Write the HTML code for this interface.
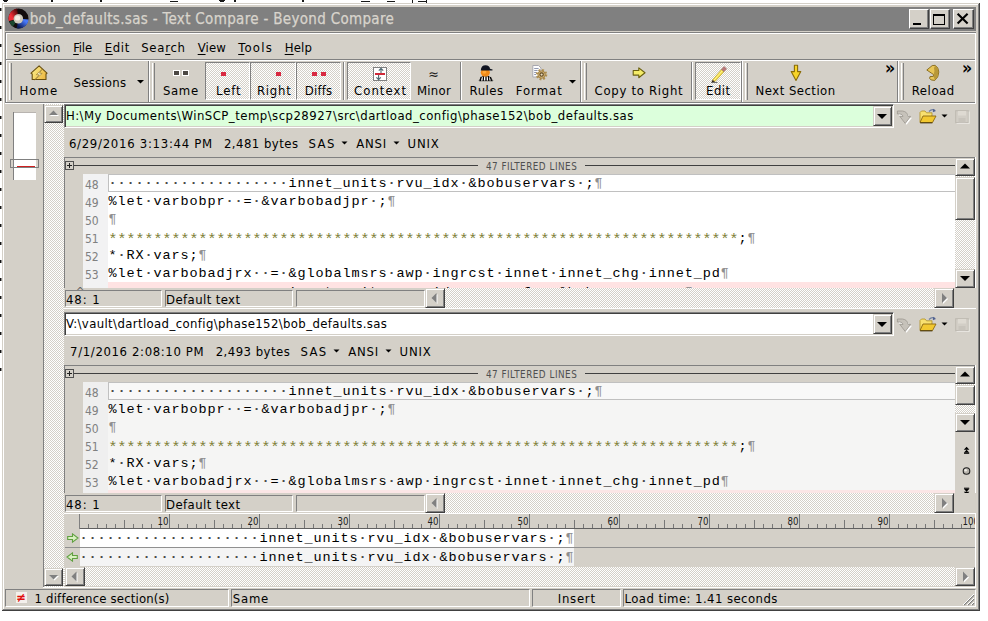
<!DOCTYPE html>
<html lang="en"><head><meta charset="utf-8"><title>bob_defaults.sas - Text Compare - Beyond Compare</title>
<style>
html,body{margin:0;padding:0;background:#fff}
body{width:988px;height:621px;position:relative;overflow:hidden;font-family:"DejaVu Sans Condensed","Liberation Sans",sans-serif;font-size:13.5px;color:#000}
.a{position:absolute;box-sizing:border-box}
.t{position:absolute;white-space:pre;line-height:20px;height:20px}
.m{font-family:"Liberation Mono","DejaVu Sans Mono",monospace}
.chk{background:repeating-conic-gradient(#fff 0% 25%,#d4d0c8 0% 50%) 0 0/2px 2px}
.rb{background:#d4d0c8;border:1px solid;border-color:#d4d0c8 #404040 #404040 #d4d0c8;box-shadow:inset 1px 1px #fff,inset -1px -1px #808080}
.m b{color:#484848;font-weight:bold}
.as{color:#808038;font-size:15.5px;letter-spacing:-0.3px;position:relative;top:2px;margin-left:-0.2px;margin-right:0.2px}
u{text-decoration:underline;text-underline-offset:2px;text-decoration-thickness:1px}
</style></head><body>
<div class="a " style="left:3px;top:0px;width:5px;height:1px;background:#181818"></div>
<div class="a " style="left:4px;top:1px;width:3px;height:1px;background:#181818"></div>
<div class="a " style="left:51px;top:0px;width:2px;height:2px;background:#181818"></div>
<div class="a " style="left:100px;top:0px;width:2px;height:2px;background:#181818"></div>
<div class="a " style="left:170px;top:1px;width:8px;height:1px;background:#181818"></div>
<div class="a " style="left:219px;top:0px;width:6px;height:1px;background:#181818"></div>
<div class="a " style="left:220px;top:1px;width:4px;height:1px;background:#181818"></div>
<div class="a " style="left:234px;top:0px;width:2px;height:2px;background:#181818"></div>
<div class="a " style="left:302px;top:0px;width:2px;height:2px;background:#181818"></div>
<div class="a " style="left:361px;top:1px;width:9px;height:1px;background:#181818"></div>
<div class="a " style="left:387px;top:1px;width:8px;height:1px;background:#181818"></div>
<div class="a " style="left:412px;top:0px;width:1px;height:3px;background:#181818"></div>
<div class="a " style="left:418px;top:1px;width:8px;height:1px;background:#181818"></div>
<div class="a " style="left:426px;top:0px;width:1px;height:3px;background:#181818"></div>
<div class="a " style="left:0px;top:8px;width:1px;height:3px;background:#101010"></div>
<div class="a " style="left:1px;top:8px;width:1px;height:3px;background:#909090"></div>
<div class="a " style="left:0px;top:26px;width:1px;height:3px;background:#101010"></div>
<div class="a " style="left:1px;top:26px;width:1px;height:3px;background:#909090"></div>
<div class="a " style="left:0px;top:44px;width:1px;height:3px;background:#101010"></div>
<div class="a " style="left:1px;top:44px;width:1px;height:3px;background:#909090"></div>
<div class="a " style="left:0px;top:62px;width:1px;height:3px;background:#101010"></div>
<div class="a " style="left:1px;top:62px;width:1px;height:3px;background:#909090"></div>
<div class="a " style="left:0px;top:80px;width:1px;height:3px;background:#101010"></div>
<div class="a " style="left:1px;top:80px;width:1px;height:3px;background:#909090"></div>
<div class="a " style="left:0px;top:98px;width:1px;height:3px;background:#101010"></div>
<div class="a " style="left:1px;top:98px;width:1px;height:3px;background:#909090"></div>
<div class="a " style="left:0px;top:116px;width:1px;height:3px;background:#101010"></div>
<div class="a " style="left:1px;top:116px;width:1px;height:3px;background:#909090"></div>
<div class="a " style="left:0px;top:134px;width:1px;height:3px;background:#101010"></div>
<div class="a " style="left:1px;top:134px;width:1px;height:3px;background:#909090"></div>
<div class="a " style="left:0px;top:152px;width:1px;height:3px;background:#101010"></div>
<div class="a " style="left:1px;top:152px;width:1px;height:3px;background:#909090"></div>
<div class="a " style="left:0px;top:170px;width:1px;height:3px;background:#101010"></div>
<div class="a " style="left:1px;top:170px;width:1px;height:3px;background:#909090"></div>
<div class="a " style="left:0px;top:188px;width:1px;height:3px;background:#101010"></div>
<div class="a " style="left:1px;top:188px;width:1px;height:3px;background:#909090"></div>
<div class="a " style="left:0px;top:206px;width:1px;height:3px;background:#101010"></div>
<div class="a " style="left:1px;top:206px;width:1px;height:3px;background:#909090"></div>
<div class="a " style="left:0px;top:224px;width:1px;height:3px;background:#101010"></div>
<div class="a " style="left:1px;top:224px;width:1px;height:3px;background:#909090"></div>
<div class="a " style="left:0px;top:242px;width:1px;height:3px;background:#101010"></div>
<div class="a " style="left:1px;top:242px;width:1px;height:3px;background:#909090"></div>
<div class="a " style="left:0px;top:260px;width:1px;height:3px;background:#101010"></div>
<div class="a " style="left:1px;top:260px;width:1px;height:3px;background:#909090"></div>
<div class="a " style="left:0px;top:278px;width:1px;height:3px;background:#101010"></div>
<div class="a " style="left:1px;top:278px;width:1px;height:3px;background:#909090"></div>
<div class="a " style="left:0px;top:296px;width:1px;height:3px;background:#101010"></div>
<div class="a " style="left:1px;top:296px;width:1px;height:3px;background:#909090"></div>
<div class="a " style="left:0px;top:314px;width:1px;height:3px;background:#101010"></div>
<div class="a " style="left:1px;top:314px;width:1px;height:3px;background:#909090"></div>
<div class="a " style="left:0px;top:332px;width:1px;height:3px;background:#101010"></div>
<div class="a " style="left:1px;top:332px;width:1px;height:3px;background:#909090"></div>
<div class="a " style="left:0px;top:350px;width:1px;height:3px;background:#101010"></div>
<div class="a " style="left:1px;top:350px;width:1px;height:3px;background:#909090"></div>
<div class="a " style="left:0px;top:368px;width:1px;height:3px;background:#101010"></div>
<div class="a " style="left:1px;top:368px;width:1px;height:3px;background:#909090"></div>
<div class="a " style="left:2px;top:3px;width:978px;height:608px;background:#d4d0c8"></div>
<div class="a " style="left:3px;top:4px;width:976px;height:1px;background:#ffffff"></div>
<div class="a " style="left:3px;top:4px;width:1px;height:606px;background:#ffffff"></div>
<div class="a " style="left:2px;top:610px;width:978px;height:1px;background:#404040"></div>
<div class="a " style="left:979px;top:3px;width:1px;height:608px;background:#404040"></div>
<div class="a " style="left:3px;top:609px;width:976px;height:1px;background:#808080"></div>
<div class="a " style="left:978px;top:4px;width:1px;height:606px;background:#808080"></div>
<div class="a " style="left:5px;top:7px;width:971px;height:24px;background:#808080"></div>
<div class="t" style="left:29.7px;top:9.40px;font-size:15px;color:#d8d4cc;letter-spacing:0.32px;-webkit-text-stroke:0.25px #d8d4cc;">bob_defaults.sas - Text Compare - Beyond Compare</div>
<svg class="a" style="left:7px;top:7px" width="23" height="23"><defs><linearGradient id="rg" x1="0" y1="1" x2="1" y2="0"><stop offset="0.25" stop-color="#f03038"/><stop offset="1" stop-color="#500808"/></linearGradient>
<linearGradient id="bg" x1="1" y1="0" x2="0" y2="1"><stop offset="0.2" stop-color="#4878f8"/><stop offset="1" stop-color="#0c1c58"/></linearGradient></defs>
<circle cx="11.5" cy="11.5" r="7.3" fill="none" stroke="#120c0c" stroke-width="5.4"/>
<path d="M4.45 13.39 A7.3 7.3 0 0 1 10.48 4.27" fill="none" stroke="url(#rg)" stroke-width="5.4"/>
<path d="M18.77 12.14 A7.3 7.3 0 0 1 10.23 18.69" fill="none" stroke="url(#bg)" stroke-width="5.4"/>
<path d="M7.31 17.48 A7.3 7.3 0 0 1 4.64 14" fill="none" stroke="#1c4830" stroke-width="5"/>
<circle cx="11.3" cy="11.9" r="4.7" fill="#cfcabc"/><circle cx="10.6" cy="11" r="2.6" fill="#f2eee4"/></svg>
<div class="a " style="left:909px;top:9px;width:20px;height:20px;background:#d4d0c8;border:1px solid;border-color:#fff #404040 #404040 #fff;box-shadow:inset -1px -1px #808080"></div>
<div class="a " style="left:930px;top:9px;width:20px;height:20px;background:#d4d0c8;border:1px solid;border-color:#fff #404040 #404040 #fff;box-shadow:inset -1px -1px #808080"></div>
<div class="a " style="left:953px;top:9px;width:21px;height:20px;background:#d4d0c8;border:1px solid;border-color:#fff #404040 #404040 #fff;box-shadow:inset -1px -1px #808080"></div>
<div class="a " style="left:913px;top:23px;width:8px;height:2px;background:#000"></div>
<div class="a " style="left:933px;top:14px;width:12px;height:11px;border:1px solid #000;border-top-width:2px"></div>
<svg class="a" style="left:956px;top:13px" width="14" height="12"><path d="M1.6 0.8 L11.6 10.6 M11.6 0.8 L1.6 10.6" stroke="#000" stroke-width="2.1" fill="none"/></svg>
<div class="a " style="left:5px;top:32px;width:971px;height:1px;background:#808080"></div>
<div class="a " style="left:5px;top:33px;width:971px;height:1px;background:#ffffff"></div>
<div class="a " style="left:5px;top:32px;width:1px;height:71px;background:#808080"></div>
<div class="a " style="left:6px;top:33px;width:1px;height:70px;background:#ffffff"></div>
<div class="a " style="left:975px;top:33px;width:1px;height:70px;background:#ffffff"></div>
<div class="t" style="left:13.7px;top:38.00px;font-size:13px;letter-spacing:0.33px;"><u>S</u>ession</div>
<div class="t" style="left:73.2px;top:38.00px;font-size:13px;letter-spacing:-0.19px;"><u>F</u>ile</div>
<div class="t" style="left:104.7px;top:38.00px;font-size:13px;letter-spacing:0.65px;"><u>E</u>dit</div>
<div class="t" style="left:141.2px;top:38.00px;font-size:13px;letter-spacing:0.73px;">Sea<u>r</u>ch</div>
<div class="t" style="left:197.7px;top:38.00px;font-size:13px;letter-spacing:0.16px;"><u>V</u>iew</div>
<div class="t" style="left:238.2px;top:38.00px;font-size:13px;letter-spacing:1.25px;"><u>T</u>ools</div>
<div class="t" style="left:284.7px;top:38.00px;font-size:13px;letter-spacing:0.2px;"><u>H</u>elp</div>
<div class="a " style="left:6px;top:59px;width:969px;height:1px;background:#808080"></div>
<div class="a " style="left:6px;top:60px;width:969px;height:1px;background:#ffffff"></div>
<div class="a " style="left:6px;top:102px;width:969px;height:1px;background:#808080"></div>
<div class="a " style="left:5px;top:103px;width:971px;height:1px;background:#ffffff"></div>
<div class="a " style="left:148px;top:61px;width:1px;height:41px;background:#808080"></div>
<div class="a " style="left:149px;top:61px;width:1px;height:41px;background:#ffffff"></div>
<div class="a " style="left:580px;top:61px;width:1px;height:41px;background:#808080"></div>
<div class="a " style="left:581px;top:61px;width:1px;height:41px;background:#ffffff"></div>
<div class="a " style="left:741px;top:61px;width:1px;height:41px;background:#808080"></div>
<div class="a " style="left:742px;top:61px;width:1px;height:41px;background:#ffffff"></div>
<div class="a " style="left:897px;top:61px;width:1px;height:41px;background:#808080"></div>
<div class="a " style="left:898px;top:61px;width:1px;height:41px;background:#ffffff"></div>
<div class="a " style="left:9px;top:63px;width:1px;height:37px;background:#ffffff"></div>
<div class="a " style="left:11px;top:63px;width:1px;height:37px;background:#808080"></div>
<div class="a " style="left:152px;top:63px;width:1px;height:37px;background:#ffffff"></div>
<div class="a " style="left:154px;top:63px;width:1px;height:37px;background:#808080"></div>
<div class="a " style="left:584px;top:63px;width:1px;height:37px;background:#ffffff"></div>
<div class="a " style="left:586px;top:63px;width:1px;height:37px;background:#808080"></div>
<div class="a " style="left:745px;top:63px;width:1px;height:37px;background:#ffffff"></div>
<div class="a " style="left:747px;top:63px;width:1px;height:37px;background:#808080"></div>
<div class="a " style="left:901px;top:63px;width:1px;height:37px;background:#ffffff"></div>
<div class="a " style="left:903px;top:63px;width:1px;height:37px;background:#808080"></div>
<svg class="a" style="left:29px;top:64px" width="20" height="18"><defs><linearGradient id="hg" x1="0" y1="0" x2="1" y2="0.4"><stop offset="0" stop-color="#fbf590"/><stop offset="1" stop-color="#eebc48"/></linearGradient></defs>
<path d="M10.1 1.9 L18 9.2 L17 10 L17 15.5 L3.2 15.5 L3.2 10 L2 9.2 Z" fill="url(#hg)" stroke="#6a5010" stroke-width="1.1" stroke-linejoin="round"/>
<path d="M12.8 5.6 L7.4 10.6 L10.2 10.8 L5.6 16 L13.2 9.4 L10.4 9.2 Z" fill="#fffcd8" stroke="#8a6a18" stroke-width="0.6"/></svg>
<div class="t" style="left:19.6px;top:81.00px;font-size:13px;letter-spacing:0.98px;">Home</div>
<div class="t" style="left:73.5px;top:73.00px;font-size:13px;letter-spacing:0.25px;">Sessions</div>
<svg class="a" style="left:136px;top:79px" width="9" height="6"><polygon points="1,1 8,1 4.5,4.5" fill="#000"/></svg>
<div class="a " style="left:173px;top:70px;width:7px;height:6px;background:#ffffff"></div>
<div class="a " style="left:174px;top:71px;width:5px;height:4px;background:#4c4844"></div>
<div class="a " style="left:182px;top:70px;width:7px;height:6px;background:#ffffff"></div>
<div class="a " style="left:183px;top:71px;width:5px;height:4px;background:#4c4844"></div>
<div class="t" style="left:162.9px;top:81.00px;font-size:13px;letter-spacing:0.67px;">Same</div>
<div class="a chk" style="left:205px;top:62px;width:45px;height:38px;border:1px solid;border-color:#808080 #fff #fff #808080"></div>
<div class="a " style="left:221px;top:72px;width:5px;height:4px;background:#d82840"></div>
<div class="t" style="left:216.0px;top:81.00px;font-size:13px;letter-spacing:0.88px;">Left</div>
<div class="a chk" style="left:250px;top:62px;width:46px;height:38px;border:1px solid;border-color:#808080 #fff #fff #808080"></div>
<div class="a " style="left:276px;top:72px;width:5px;height:4px;background:#d82840"></div>
<div class="t" style="left:256.9px;top:81.00px;font-size:13px;letter-spacing:0.77px;">Right</div>
<div class="a chk" style="left:296px;top:62px;width:45px;height:38px;border:1px solid;border-color:#808080 #fff #fff #808080"></div>
<div class="a " style="left:312px;top:72px;width:5px;height:4px;background:#d82840"></div>
<div class="a " style="left:321px;top:72px;width:5px;height:4px;background:#d82840"></div>
<div class="t" style="left:304.7px;top:81.00px;font-size:13px;letter-spacing:0.22px;">Diffs</div>
<div class="a " style="left:343px;top:62px;width:1px;height:38px;background:#808080"></div>
<div class="a " style="left:344px;top:62px;width:1px;height:38px;background:#ffffff"></div>
<div class="a chk" style="left:347px;top:62px;width:64px;height:38px;border:1px solid;border-color:#808080 #fff #fff #808080"></div>
<svg class="a" style="left:373px;top:67px" width="15" height="15"><rect x="0.5" y="0.5" width="13" height="13" fill="#fff" stroke="#808080"/>
<path d="M8 1.2 L8 6 M5.8 3.6 L8 1.3 L10.2 3.6 M5.6 12.6 L5.6 8 M3.4 10.4 L5.6 12.7 L7.8 10.4" stroke="#506870" stroke-width="1.1" fill="none"/>
<rect x="2" y="6" width="10" height="2" fill="#d02838"/></svg>
<div class="t" style="left:354.0px;top:81.00px;font-size:13px;letter-spacing:1.03px;">Context</div>
<div class="t" style="left:428.2px;top:64.00px;font-size:14px;color:#202020;letter-spacing:1.04px;">≈</div>
<div class="t" style="left:416.9px;top:81.00px;font-size:13px;letter-spacing:0.3px;">Minor</div>
<div class="a " style="left:460px;top:62px;width:1px;height:38px;background:#808080"></div>
<div class="a " style="left:461px;top:62px;width:1px;height:38px;background:#ffffff"></div>
<svg class="a" style="left:477px;top:64px" width="18" height="18"><path d="M2 16.8 L4.5 12.8 Q8.5 10.5 12.5 12.8 L16 16.8 Z" fill="#fff" stroke="#101010" stroke-width="0.6"/>
<path d="M4.2 13 L3.2 17 M6.5 12 L6.2 17 M9 11.8 L9 17 M11.4 12 L11.8 17 M13.4 13 L14.6 17" stroke="#000" stroke-width="1.3"/>
<ellipse cx="8.3" cy="8.6" rx="4.6" ry="4" fill="#f08a18"/><ellipse cx="7.4" cy="8" rx="2" ry="1.8" fill="#ffa838"/>
<path d="M3.8 6.4 Q4 1.2 8.6 1.2 Q12.6 1.2 13 4.8 L15.6 5.4 L15.4 6.6 L3.8 6.6 Z" fill="#101420"/></svg>
<div class="t" style="left:469.6px;top:81.00px;font-size:13px;letter-spacing:0.5px;">Rules</div>
<svg class="a" style="left:531px;top:64px" width="18" height="18"><path d="M1.8 1.5 L7.5 1.5 L10 4 L10 13 L1.8 13 Z" fill="#fdfdfd" stroke="#a8a8b0" stroke-width="1"/>
<path d="M3.2 4.5 H7.6 M3.2 6.5 H6.6 M3.2 8.5 H5.6 M3.2 10.5 H5" stroke="#9098b0" stroke-width="1"/>
<circle cx="10.6" cy="10.6" r="4.6" fill="none" stroke="#b09050" stroke-width="2.2" stroke-dasharray="1.9 1.7"/>
<circle cx="10.6" cy="10.6" r="3.7" fill="#d2b478" stroke="#9a7838" stroke-width="0.8"/>
<circle cx="10.6" cy="10.6" r="1.7" fill="#e8dcc0" stroke="#604820" stroke-width="1.1"/></svg>
<div class="t" style="left:515.7px;top:81.00px;font-size:13px;letter-spacing:0.99px;">Format</div>
<svg class="a" style="left:568px;top:79px" width="9" height="6"><polygon points="1,1 8,1 4.5,4.5" fill="#000"/></svg>
<svg class="a" style="left:632px;top:67px" width="15" height="12"><path d="M1.2 3.5 L6.8 3.5 L6.8 0.9 L13 5.8 L6.8 10.7 L6.8 8.1 L1.2 8.1 Z" fill="#f4ec68" stroke="#6a6010" stroke-width="1.1" stroke-linejoin="round"/></svg>
<div class="t" style="left:594.6px;top:81.00px;font-size:13px;letter-spacing:0.7px;">Copy to Right</div>
<div class="a " style="left:691px;top:62px;width:1px;height:38px;background:#808080"></div>
<div class="a " style="left:692px;top:62px;width:1px;height:38px;background:#ffffff"></div>
<div class="a chk" style="left:695px;top:62px;width:46px;height:38px;border:1px solid;border-color:#808080 #fff #fff #808080"></div>
<svg class="a" style="left:710px;top:65px" width="18" height="18"><path d="M2.5 15 L11.5 4.5 L14 6.6 L5 16.6 Z" fill="#f4dc48" stroke="#b09828" stroke-width="0.6"/>
<path d="M3.6 15.6 L12.6 5.4" stroke="#fff8a0" stroke-width="0.9"/>
<path d="M11.5 4.5 L14 1.6 L16.6 3.8 L14 6.6 Z" fill="#b87878" stroke="#905858" stroke-width="0.5"/>
<path d="M2.5 15 L1.4 17.4 L5 16.6 Z" fill="#302010"/>
<path d="M1 17.5 H7.5" stroke="#707070" stroke-width="1"/></svg>
<div class="t" style="left:706.1px;top:81.00px;font-size:13px;letter-spacing:0.48px;">Edit</div>
<svg class="a" style="left:790px;top:64px" width="12" height="18"><path d="M4.4 1.2 L7.6 1.2 L7.6 7.6 L10.8 7.6 L6 16.4 L1.2 7.6 L4.4 7.6 Z" fill="#f8d428" stroke="#8a6c08" stroke-width="1.1" stroke-linejoin="round"/></svg>
<div class="t" style="left:755.6px;top:81.00px;font-size:13px;letter-spacing:0.47px;">Next Section</div>
<div class="t" style="left:885px;top:57.50px;font-size:17.5px;font-weight:bold;">»</div>
<svg class="a" style="left:925px;top:64px" width="16" height="18"><path d="M7.2 1.6 L10.2 1.3 Q13.6 3.4 13.8 8 Q13.6 13.6 9.8 16.4 L6.2 16 Q3.6 14.4 5 12.6 L8.4 12.4 L8.6 10.6 L6.8 9.4 L1.8 6 Z" fill="#e8c658" stroke="#806418" stroke-width="0.9" stroke-linejoin="round"/>
<path d="M10.2 1.6 Q13.2 3.8 13.3 8 Q13.2 13 9.8 16 L8.6 12.4 L8.8 10 Q10 7 9 4 Z" fill="#b89838"/></svg>
<div class="t" style="left:911.8px;top:81.00px;font-size:13px;letter-spacing:0.53px;">Reload</div>
<div class="t" style="left:962px;top:57.50px;font-size:17.5px;font-weight:bold;">»</div>
<div class="a " style="left:13px;top:112px;width:23px;height:68px;background:#ffffff"></div>
<div class="a " style="left:13px;top:112px;width:23px;height:1px;background:#b8b4b0"></div>
<div class="a " style="left:13px;top:112px;width:1px;height:68px;background:#808080"></div>
<div class="a " style="left:10px;top:159px;width:29px;height:9px;border:1px solid #808080"></div>
<div class="a " style="left:17px;top:166px;width:18px;height:1px;background:#d02020"></div>
<div class="a " style="left:43px;top:104px;width:1px;height:483px;background:#808080"></div>
<div class="a chk" style="left:44px;top:104px;width:20px;height:483px;"></div>
<div class="a rb" style="left:44px;top:105px;width:19px;height:18px"></div>
<svg class="a" style="left:48px;top:110px" width="12" height="8"><g transform="translate(1,1)"><polygon points="1,5.0 10,5.0 5.5,0.5" fill="#ffffff"/></g><polygon points="1,5.0 10,5.0 5.5,0.5" fill="#808080"/></svg>
<div class="a rb" style="left:44px;top:568px;width:19px;height:18px"></div>
<svg class="a" style="left:48px;top:574px" width="12" height="8"><g transform="translate(1,1)"><polygon points="1,1 10,1 5.5,5.5" fill="#ffffff"/></g><polygon points="1,1 10,1 5.5,5.5" fill="#808080"/></svg>
<div class="a " style="left:64px;top:104px;width:830px;height:24px;border:1px solid;border-color:#808080 #fff #fff #808080;box-shadow:inset 1px 1px #404040,inset -1px -1px #d4d0c8;background:#dcffdc;"></div>
<div class="t" style="left:65.9px;top:106.30px;font-size:13px;letter-spacing:0.47px;">H:\My Documents\WinSCP_temp\scp28927\src\dartload_config\phase152\bob_defaults.sas</div>
<div class="a rb" style="left:873px;top:106px;width:19px;height:20px"></div>
<svg class="a" style="left:876px;top:113px" width="13" height="8"><polygon points="1.0,1 11.0,1 6.0,6.0" fill="#000"/></svg>
<svg class="a" style="left:896px;top:110px" width="17" height="15"><path d="M2 1.6 L7 1.6 Q12 2.2 12.6 7 L15.2 7 L9.8 14 L4.4 7 L7.6 7 Q7.4 4.6 4.4 4.6 L2 4.6 Z" fill="#fff" transform="translate(0.8,0.8)"/><path d="M1.4 1 L6.4 1 Q11.4 1.6 12 6.4 L14.6 6.4 L9.2 13.4 L3.8 6.4 L7 6.4 Q6.8 4 3.8 4 L1.4 4 Z" fill="#c6c2ba" stroke="#a09c94" stroke-width="0.9"/></svg>
<svg class="a" style="left:919px;top:108px" width="19" height="16"><path d="M10 3.5 Q13 0.5 16 2.5" stroke="#7080a0" stroke-width="1.3" fill="none"/><path d="M14.2 0.8 L17 3 L13.8 4.2 Z" fill="#506090"/>
<path d="M1 14 L1 4.5 L2.5 3 L6 3 L7.5 4.8 L13 4.8 L13 8 Z" fill="#f8e070" stroke="#b09020" stroke-width="0.8"/>
<path d="M1 14.5 L4 8 L17 8 L13.5 14.5 Z" fill="#f2c830" stroke="#8a6810" stroke-width="0.9"/><path d="M1.2 14.9 H13.4" stroke="#403008" stroke-width="0.9"/></svg>
<svg class="a" style="left:941px;top:114px" width="7" height="5"><polygon points="0.5,0.5 6.5,0.5 3.5,3.5" fill="#000"/></svg>
<svg class="a" style="left:955px;top:110px" width="15" height="14"><rect x="0.7" y="0.7" width="12.6" height="12" fill="#d2cec6" stroke="#bcb8b0" stroke-width="1"/><rect x="3" y="1" width="8" height="4.5" fill="#dedad2"/><rect x="3.5" y="8" width="7" height="4.7" fill="#c8c4bc"/><path d="M14.2 1.5 L14.2 13.7 L1.5 13.7" stroke="#f4f2ee" stroke-width="0.8" fill="none"/></svg>
<div class="t" style="left:68.9px;top:134.20px;font-size:13px;letter-spacing:0.72px;">6/29/2016 3:13:44 PM</div>
<div class="t" style="left:223.9px;top:134.20px;font-size:13px;letter-spacing:0.47px;">2,481 bytes</div>
<div class="t" style="left:308.6px;top:134.20px;font-size:13px;letter-spacing:1.35px;">SAS</div>
<svg class="a" style="left:341px;top:141.2px" width="7" height="5"><polygon points="0.5,0.5 6.5,0.5 3.5,3.5" fill="#000"/></svg>
<div class="t" style="left:356.2px;top:134.20px;font-size:13px;letter-spacing:0.79px;">ANSI</div>
<svg class="a" style="left:393px;top:141.2px" width="7" height="5"><polygon points="0.5,0.5 6.5,0.5 3.5,3.5" fill="#000"/></svg>
<div class="t" style="left:407.6px;top:134.20px;font-size:13px;letter-spacing:0.81px;">UNIX</div>
<div class="a " style="left:64px;top:157px;width:912px;height:1px;background:#808080"></div>
<div class="a " style="left:64px;top:157px;width:1px;height:151px;background:#808080"></div>
<div class="a " style="left:65px;top:158px;width:890px;height:16px;background:#d4d0c8"></div>
<div class="a " style="left:74px;top:165px;width:404px;height:1px;background:#404040"></div>
<div class="a " style="left:585px;top:165px;width:370px;height:1px;background:#404040"></div>
<div class="a " style="left:65px;top:161px;width:9px;height:9px;border:1px solid #505050;background:#d4d0c8"></div>
<div class="a " style="left:67px;top:165px;width:5px;height:1px;background:#202020"></div>
<div class="a " style="left:69px;top:163px;width:1px;height:5px;background:#202020"></div>
<div class="t" style="left:485.9px;top:156.80px;font-size:9.8px;color:#505050;letter-spacing:0.51px;">47 FILTERED LINES</div>
<div class="a " style="left:65px;top:174px;width:18px;height:114px;background:#d4d0c8"></div>
<div class="a " style="left:83px;top:174px;width:25px;height:114px;background:#f2f2f3"></div>
<div class="a " style="left:108px;top:174px;width:847px;height:114px;background:#ffffff"></div>
<div class="a" style="left:65px;top:174px;width:890px;height:114px;overflow:hidden"><div class="a" style="left:-65px;top:-174px;width:988px;height:621px">
<div class="a " style="left:108px;top:174px;width:848px;height:18px;border:1px solid #c0c0c0;background:#ffffff"></div>
<div class="t" style="left:85.0px;top:174.90px;font-size:12px;color:#808080;">48</div>
<div class="t m" style="left:108.4px;top:174.00px;font-size:13.5px;letter-spacing:0.9px;"><b>····················</b>innet_units<b>·</b>rvu_idx<b>·</b>&amp;bobuservars<b>·</b>;<span style="color:#909090">¶</span></div>
<div class="t" style="left:85.0px;top:192.90px;font-size:12px;color:#808080;">49</div>
<div class="t m" style="left:108.4px;top:192.00px;font-size:13.5px;letter-spacing:0.9px;">%let<b>·</b>varbobpr<b>··</b>=<b>·</b>&amp;varbobadjpr<b>·</b>;<span style="color:#909090">¶</span></div>
<div class="t" style="left:85.0px;top:210.90px;font-size:12px;color:#808080;">50</div>
<div class="t m" style="left:108.4px;top:210.00px;font-size:13.5px;letter-spacing:0.9px;"><span style="color:#909090">¶</span></div>
<div class="t" style="left:85.0px;top:228.90px;font-size:12px;color:#808080;">51</div>
<div class="t m" style="left:108.4px;top:228.00px;font-size:13.5px;letter-spacing:0.9px;"><span class="as">**********************************************************************</span>;<span style="color:#909090">¶</span></div>
<div class="t" style="left:85.0px;top:246.90px;font-size:12px;color:#808080;">52</div>
<div class="t m" style="left:108.4px;top:246.00px;font-size:13.5px;letter-spacing:0.9px;">*<b>·</b>RX<b>·</b>vars;<span style="color:#909090">¶</span></div>
<div class="t" style="left:85.0px;top:264.90px;font-size:12px;color:#808080;">53</div>
<div class="t m" style="left:108.4px;top:264.00px;font-size:13.5px;letter-spacing:0.9px;">%let<b>·</b>varbobadjrx<b>··</b>=<b>·</b>&amp;globalmsrs<b>·</b>awp<b>·</b>ingrcst<b>·</b>innet<b>·</b>innet_chg<b>·</b>innet_pd<span style="color:#909090">¶</span></div>
<div class="a " style="left:108px;top:282px;width:847px;height:16px;background:#ffe3e3"></div>
<div class="t m" style="left:108.4px;top:282.70px;font-size:13.5px;letter-spacing:0.9px;"><b>····················</b>innet_units<b>·</b>rvu_idx<b>·</b>rvuperfac<b>·</b>&amp;bobuservars<b>·</b>;<span style="color:#909090">¶</span></div>
</div></div>
<div class="a chk" style="left:955px;top:158px;width:20px;height:130px;"></div>
<div class="a rb" style="left:955px;top:158px;width:20px;height:18px"></div>
<svg class="a" style="left:959px;top:163px" width="13" height="8"><polygon points="1.0,5.5 11.0,5.5 6.0,0.5" fill="#000"/></svg>
<div class="a rb" style="left:955px;top:177px;width:20px;height:43px"></div>
<div class="a rb" style="left:955px;top:269px;width:20px;height:19px"></div>
<svg class="a" style="left:959px;top:275px" width="13" height="8"><polygon points="1.0,1 11.0,1 6.0,6.0" fill="#000"/></svg>
<div class="a " style="left:975px;top:157px;width:1px;height:151px;background:#ffffff"></div>
<div class="a " style="left:64px;top:288px;width:912px;height:21px;background:#d4d0c8"></div>
<div class="a " style="left:65px;top:290px;width:97px;height:17px;border:1px solid;border-color:#808080 #fff #fff #808080;"></div>
<div class="t" style="left:65.9px;top:290.20px;font-size:13px;letter-spacing:0.93px;">48: 1</div>
<div class="a " style="left:165px;top:290px;width:128px;height:17px;border:1px solid;border-color:#808080 #fff #fff #808080;"></div>
<div class="t" style="left:166.1px;top:290.20px;font-size:13px;letter-spacing:0.4px;">Default text</div>
<div class="a " style="left:296px;top:290px;width:129px;height:17px;border:1px solid;border-color:#808080 #fff #fff #808080;"></div>
<div class="a chk" style="left:425px;top:288px;width:530px;height:20px;"></div>
<div class="a rb" style="left:425px;top:288px;width:20px;height:20px"></div>
<svg class="a" style="left:430px;top:292px" width="9" height="13"><g transform="translate(1,1)"><polygon points="6.5,1.0 6.5,11.0 1.5,6.0" fill="#ffffff"/></g><polygon points="6.5,1.0 6.5,11.0 1.5,6.0" fill="#808080"/></svg>
<div class="a rb" style="left:934px;top:288px;width:20px;height:20px"></div>
<svg class="a" style="left:941px;top:292px" width="9" height="13"><g transform="translate(1,1)"><polygon points="1,1.0 1,11.0 6.0,6.0" fill="#ffffff"/></g><polygon points="1,1.0 1,11.0 6.0,6.0" fill="#808080"/></svg>
<div class="a " style="left:954px;top:288px;width:21px;height:20px;background:#d4d0c8"></div>
<div class="a " style="left:64px;top:308px;width:912px;height:1px;background:#ffffff"></div>
<div class="t" style="left:76px;top:281.50px;font-size:11px;color:#606060;height:8px;overflow:hidden;">^</div>
<div class="a " style="left:64px;top:312px;width:830px;height:24px;border:1px solid;border-color:#808080 #fff #fff #808080;box-shadow:inset 1px 1px #404040,inset -1px -1px #d4d0c8;background:#ffffff;"></div>
<div class="t" style="left:65.9px;top:314.30px;font-size:13px;letter-spacing:0.38px;">V:\vault\dartload_config\phase152\bob_defaults.sas</div>
<div class="a rb" style="left:873px;top:314px;width:19px;height:20px"></div>
<svg class="a" style="left:876px;top:321px" width="13" height="8"><polygon points="1.0,1 11.0,1 6.0,6.0" fill="#000"/></svg>
<svg class="a" style="left:896px;top:318px" width="17" height="15"><path d="M2 1.6 L7 1.6 Q12 2.2 12.6 7 L15.2 7 L9.8 14 L4.4 7 L7.6 7 Q7.4 4.6 4.4 4.6 L2 4.6 Z" fill="#fff" transform="translate(0.8,0.8)"/><path d="M1.4 1 L6.4 1 Q11.4 1.6 12 6.4 L14.6 6.4 L9.2 13.4 L3.8 6.4 L7 6.4 Q6.8 4 3.8 4 L1.4 4 Z" fill="#c6c2ba" stroke="#a09c94" stroke-width="0.9"/></svg>
<svg class="a" style="left:919px;top:316px" width="19" height="16"><path d="M10 3.5 Q13 0.5 16 2.5" stroke="#7080a0" stroke-width="1.3" fill="none"/><path d="M14.2 0.8 L17 3 L13.8 4.2 Z" fill="#506090"/>
<path d="M1 14 L1 4.5 L2.5 3 L6 3 L7.5 4.8 L13 4.8 L13 8 Z" fill="#f8e070" stroke="#b09020" stroke-width="0.8"/>
<path d="M1 14.5 L4 8 L17 8 L13.5 14.5 Z" fill="#f2c830" stroke="#8a6810" stroke-width="0.9"/><path d="M1.2 14.9 H13.4" stroke="#403008" stroke-width="0.9"/></svg>
<svg class="a" style="left:941px;top:322px" width="7" height="5"><polygon points="0.5,0.5 6.5,0.5 3.5,3.5" fill="#000"/></svg>
<svg class="a" style="left:955px;top:318px" width="15" height="14"><rect x="0.7" y="0.7" width="12.6" height="12" fill="#d2cec6" stroke="#bcb8b0" stroke-width="1"/><rect x="3" y="1" width="8" height="4.5" fill="#dedad2"/><rect x="3.5" y="8" width="7" height="4.7" fill="#c8c4bc"/><path d="M14.2 1.5 L14.2 13.7 L1.5 13.7" stroke="#f4f2ee" stroke-width="0.8" fill="none"/></svg>
<div class="t" style="left:70.1px;top:342.40px;font-size:13px;letter-spacing:0.63px;">7/1/2016 2:08:10 PM</div>
<div class="t" style="left:215.7px;top:342.40px;font-size:13px;letter-spacing:0.47px;">2,493 bytes</div>
<div class="t" style="left:300.4px;top:342.40px;font-size:13px;letter-spacing:1.35px;">SAS</div>
<svg class="a" style="left:333px;top:349.4px" width="7" height="5"><polygon points="0.5,0.5 6.5,0.5 3.5,3.5" fill="#000"/></svg>
<div class="t" style="left:348.2px;top:342.40px;font-size:13px;letter-spacing:0.79px;">ANSI</div>
<svg class="a" style="left:385px;top:349.4px" width="7" height="5"><polygon points="0.5,0.5 6.5,0.5 3.5,3.5" fill="#000"/></svg>
<div class="t" style="left:399.6px;top:342.40px;font-size:13px;letter-spacing:0.81px;">UNIX</div>
<div class="a " style="left:64px;top:365px;width:912px;height:1px;background:#808080"></div>
<div class="a " style="left:64px;top:365px;width:1px;height:148px;background:#808080"></div>
<div class="a " style="left:65px;top:366px;width:890px;height:16px;background:#d4d0c8"></div>
<div class="a " style="left:74px;top:373px;width:404px;height:1px;background:#404040"></div>
<div class="a " style="left:585px;top:373px;width:370px;height:1px;background:#404040"></div>
<div class="a " style="left:65px;top:369px;width:9px;height:9px;border:1px solid #505050;background:#d4d0c8"></div>
<div class="a " style="left:67px;top:373px;width:5px;height:1px;background:#202020"></div>
<div class="a " style="left:69px;top:371px;width:1px;height:5px;background:#202020"></div>
<div class="t" style="left:485.9px;top:364.80px;font-size:9.8px;color:#505050;letter-spacing:0.51px;">47 FILTERED LINES</div>
<div class="a " style="left:65px;top:382px;width:18px;height:111px;background:#d4d0c8"></div>
<div class="a " style="left:83px;top:382px;width:25px;height:111px;background:#efefef"></div>
<div class="a " style="left:108px;top:382px;width:847px;height:111px;background:#f5f5f4"></div>
<div class="a" style="left:65px;top:382px;width:890px;height:111px;overflow:hidden"><div class="a" style="left:-65px;top:-382px;width:988px;height:621px">
<div class="a " style="left:108px;top:382px;width:848px;height:18px;border:1px solid #c0c0c0;background:#f8f8f8"></div>
<div class="t" style="left:85.0px;top:382.90px;font-size:12px;color:#808080;">48</div>
<div class="t m" style="left:108.4px;top:382.00px;font-size:13.5px;letter-spacing:0.9px;"><b>····················</b>innet_units<b>·</b>rvu_idx<b>·</b>&amp;bobuservars<b>·</b>;<span style="color:#909090">¶</span></div>
<div class="t" style="left:85.0px;top:400.90px;font-size:12px;color:#808080;">49</div>
<div class="t m" style="left:108.4px;top:400.00px;font-size:13.5px;letter-spacing:0.9px;">%let<b>·</b>varbobpr<b>··</b>=<b>·</b>&amp;varbobadjpr<b>·</b>;<span style="color:#909090">¶</span></div>
<div class="t" style="left:85.0px;top:418.90px;font-size:12px;color:#808080;">50</div>
<div class="t m" style="left:108.4px;top:418.00px;font-size:13.5px;letter-spacing:0.9px;"><span style="color:#909090">¶</span></div>
<div class="t" style="left:85.0px;top:436.90px;font-size:12px;color:#808080;">51</div>
<div class="t m" style="left:108.4px;top:436.00px;font-size:13.5px;letter-spacing:0.9px;"><span class="as">**********************************************************************</span>;<span style="color:#909090">¶</span></div>
<div class="t" style="left:85.0px;top:454.90px;font-size:12px;color:#808080;">52</div>
<div class="t m" style="left:108.4px;top:454.00px;font-size:13.5px;letter-spacing:0.9px;">*<b>·</b>RX<b>·</b>vars;<span style="color:#909090">¶</span></div>
<div class="t" style="left:85.0px;top:472.90px;font-size:12px;color:#808080;">53</div>
<div class="t m" style="left:108.4px;top:472.00px;font-size:13.5px;letter-spacing:0.9px;">%let<b>·</b>varbobadjrx<b>··</b>=<b>·</b>&amp;globalmsrs<b>·</b>awp<b>·</b>ingrcst<b>·</b>innet<b>·</b>innet_chg<b>·</b>innet_pd<span style="color:#909090">¶</span></div>
<div class="a " style="left:108px;top:490px;width:847px;height:12px;background:#fbe6e6"></div>
</div></div>
<div class="a chk" style="left:955px;top:366px;width:20px;height:127px;"></div>
<div class="a rb" style="left:955px;top:366px;width:20px;height:18px"></div>
<svg class="a" style="left:959px;top:371px" width="13" height="8"><polygon points="1.0,5.5 11.0,5.5 6.0,0.5" fill="#000"/></svg>
<div class="a rb" style="left:955px;top:385px;width:20px;height:20px"></div>
<div class="a rb" style="left:955px;top:413px;width:20px;height:19px"></div>
<svg class="a" style="left:959px;top:419px" width="13" height="8"><polygon points="1.0,1 11.0,1 6.0,6.0" fill="#000"/></svg>
<div class="a " style="left:955px;top:432px;width:20px;height:61px;background:#d4d0c8"></div>
<svg class="a" style="left:961px;top:446px" width="11" height="10"><path d="M2.8 3.8 L5.6 0.8 L8.4 3.8 Z M2.8 6.8 L5.6 3.8 L8.4 6.8 Z" fill="#000"/><path d="M3 7.3 H8.2" stroke="#000" stroke-width="1"/></svg>
<svg class="a" style="left:961px;top:466px" width="11" height="10"><circle cx="5.5" cy="5" r="3.3" fill="#b8b4ac" stroke="#202020" stroke-width="1.1"/><circle cx="4.6" cy="4.2" r="1.2" fill="#f0eee8"/></svg>
<svg class="a" style="left:961px;top:487px" width="11" height="10"><path d="M3 1.2 H8.2" stroke="#000" stroke-width="1"/><path d="M2.8 1.7 L5.6 4.7 L8.4 1.7 Z M2.8 4.7 L5.6 7.7 L8.4 4.7 Z" fill="#000"/></svg>
<div class="a " style="left:975px;top:365px;width:1px;height:148px;background:#ffffff"></div>
<div class="a " style="left:64px;top:493px;width:912px;height:21px;background:#d4d0c8"></div>
<div class="a " style="left:65px;top:495px;width:97px;height:17px;border:1px solid;border-color:#808080 #fff #fff #808080;"></div>
<div class="t" style="left:65.9px;top:495.20px;font-size:13px;letter-spacing:0.93px;">48: 1</div>
<div class="a " style="left:165px;top:495px;width:128px;height:17px;border:1px solid;border-color:#808080 #fff #fff #808080;"></div>
<div class="t" style="left:166.1px;top:495.20px;font-size:13px;letter-spacing:0.4px;">Default text</div>
<div class="a " style="left:296px;top:495px;width:129px;height:17px;border:1px solid;border-color:#808080 #fff #fff #808080;"></div>
<div class="a chk" style="left:425px;top:493px;width:530px;height:20px;"></div>
<div class="a rb" style="left:425px;top:493px;width:20px;height:20px"></div>
<svg class="a" style="left:430px;top:497px" width="9" height="13"><g transform="translate(1,1)"><polygon points="6.5,1.0 6.5,11.0 1.5,6.0" fill="#ffffff"/></g><polygon points="6.5,1.0 6.5,11.0 1.5,6.0" fill="#808080"/></svg>
<div class="a rb" style="left:934px;top:493px;width:20px;height:20px"></div>
<svg class="a" style="left:941px;top:497px" width="9" height="13"><g transform="translate(1,1)"><polygon points="1,1.0 1,11.0 6.0,6.0" fill="#ffffff"/></g><polygon points="1,1.0 1,11.0 6.0,6.0" fill="#808080"/></svg>
<div class="a " style="left:954px;top:493px;width:21px;height:20px;background:#d4d0c8"></div>
<div class="a " style="left:64px;top:513px;width:912px;height:74px;background:#d4d0c8"></div>
<div class="a " style="left:64px;top:513px;width:912px;height:1px;background:#ffffff"></div>
<div class="a " style="left:65px;top:514px;width:910px;height:14px;background:#d4d0c8"></div>
<div class="a " style="left:79px;top:528px;width:896px;height:1px;background:#606060"></div>
<div class="a " style="left:79px;top:514px;width:1px;height:15px;background:#808080"></div>
<div class="a " style="left:88px;top:524px;width:1px;height:4px;background:#787878"></div>
<div class="a " style="left:97px;top:524px;width:1px;height:4px;background:#787878"></div>
<div class="a " style="left:106px;top:524px;width:1px;height:4px;background:#787878"></div>
<div class="a " style="left:115px;top:524px;width:1px;height:4px;background:#787878"></div>
<div class="a " style="left:124px;top:520px;width:1px;height:8px;background:#787878"></div>
<div class="a " style="left:133px;top:524px;width:1px;height:4px;background:#787878"></div>
<div class="a " style="left:142px;top:524px;width:1px;height:4px;background:#787878"></div>
<div class="a " style="left:151px;top:524px;width:1px;height:4px;background:#787878"></div>
<div class="a " style="left:160px;top:524px;width:1px;height:4px;background:#787878"></div>
<div class="a " style="left:169px;top:514px;width:1px;height:14px;background:#787878"></div>
<div class="a " style="left:178px;top:524px;width:1px;height:4px;background:#787878"></div>
<div class="a " style="left:187px;top:524px;width:1px;height:4px;background:#787878"></div>
<div class="a " style="left:196px;top:524px;width:1px;height:4px;background:#787878"></div>
<div class="a " style="left:205px;top:524px;width:1px;height:4px;background:#787878"></div>
<div class="a " style="left:214px;top:520px;width:1px;height:8px;background:#787878"></div>
<div class="a " style="left:223px;top:524px;width:1px;height:4px;background:#787878"></div>
<div class="a " style="left:232px;top:524px;width:1px;height:4px;background:#787878"></div>
<div class="a " style="left:241px;top:524px;width:1px;height:4px;background:#787878"></div>
<div class="a " style="left:250px;top:524px;width:1px;height:4px;background:#787878"></div>
<div class="a " style="left:259px;top:514px;width:1px;height:14px;background:#787878"></div>
<div class="a " style="left:268px;top:524px;width:1px;height:4px;background:#787878"></div>
<div class="a " style="left:277px;top:524px;width:1px;height:4px;background:#787878"></div>
<div class="a " style="left:286px;top:524px;width:1px;height:4px;background:#787878"></div>
<div class="a " style="left:295px;top:524px;width:1px;height:4px;background:#787878"></div>
<div class="a " style="left:304px;top:520px;width:1px;height:8px;background:#787878"></div>
<div class="a " style="left:313px;top:524px;width:1px;height:4px;background:#787878"></div>
<div class="a " style="left:322px;top:524px;width:1px;height:4px;background:#787878"></div>
<div class="a " style="left:331px;top:524px;width:1px;height:4px;background:#787878"></div>
<div class="a " style="left:340px;top:524px;width:1px;height:4px;background:#787878"></div>
<div class="a " style="left:349px;top:514px;width:1px;height:14px;background:#787878"></div>
<div class="a " style="left:358px;top:524px;width:1px;height:4px;background:#787878"></div>
<div class="a " style="left:367px;top:524px;width:1px;height:4px;background:#787878"></div>
<div class="a " style="left:376px;top:524px;width:1px;height:4px;background:#787878"></div>
<div class="a " style="left:385px;top:524px;width:1px;height:4px;background:#787878"></div>
<div class="a " style="left:394px;top:520px;width:1px;height:8px;background:#787878"></div>
<div class="a " style="left:403px;top:524px;width:1px;height:4px;background:#787878"></div>
<div class="a " style="left:412px;top:524px;width:1px;height:4px;background:#787878"></div>
<div class="a " style="left:421px;top:524px;width:1px;height:4px;background:#787878"></div>
<div class="a " style="left:430px;top:524px;width:1px;height:4px;background:#787878"></div>
<div class="a " style="left:439px;top:514px;width:1px;height:14px;background:#787878"></div>
<div class="a " style="left:448px;top:524px;width:1px;height:4px;background:#787878"></div>
<div class="a " style="left:457px;top:524px;width:1px;height:4px;background:#787878"></div>
<div class="a " style="left:466px;top:524px;width:1px;height:4px;background:#787878"></div>
<div class="a " style="left:475px;top:524px;width:1px;height:4px;background:#787878"></div>
<div class="a " style="left:484px;top:520px;width:1px;height:8px;background:#787878"></div>
<div class="a " style="left:493px;top:524px;width:1px;height:4px;background:#787878"></div>
<div class="a " style="left:502px;top:524px;width:1px;height:4px;background:#787878"></div>
<div class="a " style="left:511px;top:524px;width:1px;height:4px;background:#787878"></div>
<div class="a " style="left:520px;top:524px;width:1px;height:4px;background:#787878"></div>
<div class="a " style="left:529px;top:514px;width:1px;height:14px;background:#787878"></div>
<div class="a " style="left:538px;top:524px;width:1px;height:4px;background:#787878"></div>
<div class="a " style="left:547px;top:524px;width:1px;height:4px;background:#787878"></div>
<div class="a " style="left:556px;top:524px;width:1px;height:4px;background:#787878"></div>
<div class="a " style="left:565px;top:524px;width:1px;height:4px;background:#787878"></div>
<div class="a " style="left:574px;top:520px;width:1px;height:8px;background:#787878"></div>
<div class="a " style="left:583px;top:524px;width:1px;height:4px;background:#787878"></div>
<div class="a " style="left:592px;top:524px;width:1px;height:4px;background:#787878"></div>
<div class="a " style="left:601px;top:524px;width:1px;height:4px;background:#787878"></div>
<div class="a " style="left:610px;top:524px;width:1px;height:4px;background:#787878"></div>
<div class="a " style="left:619px;top:514px;width:1px;height:14px;background:#787878"></div>
<div class="a " style="left:628px;top:524px;width:1px;height:4px;background:#787878"></div>
<div class="a " style="left:637px;top:524px;width:1px;height:4px;background:#787878"></div>
<div class="a " style="left:646px;top:524px;width:1px;height:4px;background:#787878"></div>
<div class="a " style="left:655px;top:524px;width:1px;height:4px;background:#787878"></div>
<div class="a " style="left:664px;top:520px;width:1px;height:8px;background:#787878"></div>
<div class="a " style="left:673px;top:524px;width:1px;height:4px;background:#787878"></div>
<div class="a " style="left:682px;top:524px;width:1px;height:4px;background:#787878"></div>
<div class="a " style="left:691px;top:524px;width:1px;height:4px;background:#787878"></div>
<div class="a " style="left:700px;top:524px;width:1px;height:4px;background:#787878"></div>
<div class="a " style="left:709px;top:514px;width:1px;height:14px;background:#787878"></div>
<div class="a " style="left:718px;top:524px;width:1px;height:4px;background:#787878"></div>
<div class="a " style="left:727px;top:524px;width:1px;height:4px;background:#787878"></div>
<div class="a " style="left:736px;top:524px;width:1px;height:4px;background:#787878"></div>
<div class="a " style="left:745px;top:524px;width:1px;height:4px;background:#787878"></div>
<div class="a " style="left:754px;top:520px;width:1px;height:8px;background:#787878"></div>
<div class="a " style="left:763px;top:524px;width:1px;height:4px;background:#787878"></div>
<div class="a " style="left:772px;top:524px;width:1px;height:4px;background:#787878"></div>
<div class="a " style="left:781px;top:524px;width:1px;height:4px;background:#787878"></div>
<div class="a " style="left:790px;top:524px;width:1px;height:4px;background:#787878"></div>
<div class="a " style="left:799px;top:514px;width:1px;height:14px;background:#787878"></div>
<div class="a " style="left:808px;top:524px;width:1px;height:4px;background:#787878"></div>
<div class="a " style="left:817px;top:524px;width:1px;height:4px;background:#787878"></div>
<div class="a " style="left:826px;top:524px;width:1px;height:4px;background:#787878"></div>
<div class="a " style="left:835px;top:524px;width:1px;height:4px;background:#787878"></div>
<div class="a " style="left:844px;top:520px;width:1px;height:8px;background:#787878"></div>
<div class="a " style="left:853px;top:524px;width:1px;height:4px;background:#787878"></div>
<div class="a " style="left:862px;top:524px;width:1px;height:4px;background:#787878"></div>
<div class="a " style="left:871px;top:524px;width:1px;height:4px;background:#787878"></div>
<div class="a " style="left:880px;top:524px;width:1px;height:4px;background:#787878"></div>
<div class="a " style="left:889px;top:514px;width:1px;height:14px;background:#787878"></div>
<div class="a " style="left:898px;top:524px;width:1px;height:4px;background:#787878"></div>
<div class="a " style="left:907px;top:524px;width:1px;height:4px;background:#787878"></div>
<div class="a " style="left:916px;top:524px;width:1px;height:4px;background:#787878"></div>
<div class="a " style="left:925px;top:524px;width:1px;height:4px;background:#787878"></div>
<div class="a " style="left:934px;top:520px;width:1px;height:8px;background:#787878"></div>
<div class="a " style="left:943px;top:524px;width:1px;height:4px;background:#787878"></div>
<div class="a " style="left:952px;top:524px;width:1px;height:4px;background:#787878"></div>
<div class="a " style="left:961px;top:524px;width:1px;height:4px;background:#787878"></div>
<div class="a " style="left:970px;top:524px;width:1px;height:4px;background:#787878"></div>
<div class="t" style="left:157.5px;top:511.60px;font-size:9.6px;color:#202020;">10</div>
<div class="t" style="left:247.5px;top:511.60px;font-size:9.6px;color:#202020;">20</div>
<div class="t" style="left:337.5px;top:511.60px;font-size:9.6px;color:#202020;">30</div>
<div class="t" style="left:427.5px;top:511.60px;font-size:9.6px;color:#202020;">40</div>
<div class="t" style="left:517.5px;top:511.60px;font-size:9.6px;color:#202020;">50</div>
<div class="t" style="left:607.5px;top:511.60px;font-size:9.6px;color:#202020;">60</div>
<div class="t" style="left:697.5px;top:511.60px;font-size:9.6px;color:#202020;">70</div>
<div class="t" style="left:787.5px;top:511.60px;font-size:9.6px;color:#202020;">80</div>
<div class="t" style="left:877.5px;top:511.60px;font-size:9.6px;color:#202020;">90</div>
<div class="t" style="left:962.5px;top:511.60px;font-size:9.6px;color:#202020;width:12.5px;overflow:hidden;">100</div>
<div class="a " style="left:80px;top:529px;width:494px;height:18px;background:#ffffff"></div>
<div class="a " style="left:65px;top:547px;width:910px;height:1px;background:#909090"></div>
<div class="a " style="left:80px;top:548px;width:494px;height:18px;background:#f4f4f4"></div>
<div class="t m" style="left:79.4px;top:528.60px;font-size:13.5px;letter-spacing:0.9px;"><b>····················</b>innet_units<b>·</b>rvu_idx<b>·</b>&amp;bobuservars<b>·</b>;<span style="color:#909090">¶</span></div>
<div class="t m" style="left:79.4px;top:548.40px;font-size:13.5px;letter-spacing:0.9px;"><b>····················</b>innet_units<b>·</b>rvu_idx<b>·</b>&amp;bobuservars<b>·</b>;<span style="color:#909090">¶</span></div>
<svg class="a" style="left:67px;top:533px" width="12" height="10"><path d="M0.7 3.5 L5.5 3.5 L5.5 0.9 L11 5 L5.5 9.1 L5.5 6.5 L0.7 6.5 Z" fill="#d8f0c0" stroke="#60a040" stroke-width="1.1"/></svg>
<svg class="a" style="left:66px;top:552px" width="12" height="10"><path d="M11.3 3.5 L6.5 3.5 L6.5 0.9 L1 5 L6.5 9.1 L6.5 6.5 L11.3 6.5 Z" fill="#d8f0c0" stroke="#60a040" stroke-width="1.1"/></svg>
<div class="a chk" style="left:64px;top:567px;width:911px;height:19px;"></div>
<div class="a rb" style="left:65px;top:567px;width:20px;height:19px"></div>
<svg class="a" style="left:70px;top:571px" width="9" height="13"><g transform="translate(1,1)"><polygon points="6.5,0.5 6.5,10.5 1.5,5.5" fill="#ffffff"/></g><polygon points="6.5,0.5 6.5,10.5 1.5,5.5" fill="#808080"/></svg>
<div class="a rb" style="left:955px;top:567px;width:20px;height:19px"></div>
<svg class="a" style="left:962px;top:571px" width="9" height="13"><g transform="translate(1,1)"><polygon points="1,0.5 1,10.5 6.0,5.5" fill="#ffffff"/></g><polygon points="1,0.5 1,10.5 6.0,5.5" fill="#808080"/></svg>
<div class="a " style="left:975px;top:513px;width:1px;height:74px;background:#ffffff"></div>
<div class="a " style="left:43px;top:587px;width:933px;height:1px;background:#ffffff"></div>
<div class="a " style="left:5px;top:589px;width:224px;height:18px;border:1px solid;border-color:#808080 #fff #fff #808080;"></div>
<div class="a " style="left:231px;top:589px;width:299px;height:18px;border:1px solid;border-color:#808080 #fff #fff #808080;"></div>
<div class="a " style="left:532px;top:589px;width:89px;height:18px;border:1px solid;border-color:#808080 #fff #fff #808080;"></div>
<div class="a " style="left:623px;top:589px;width:353px;height:18px;border:1px solid;border-color:#808080 #fff #fff #808080;"></div>
<div class="a " style="left:16px;top:592px;width:11px;height:11px;background:#f4f0ec"></div>
<div class="t" style="left:16.2px;top:588.00px;font-size:13px;color:#e01010;letter-spacing:0.79px;font-weight:bold;">≠</div>
<div class="t" style="left:34.6px;top:589.00px;font-size:13px;letter-spacing:0.17px;">1 difference section(s)</div>
<div class="t" style="left:232.7px;top:589.00px;font-size:13px;letter-spacing:0.8px;">Same</div>
<div class="t" style="left:557.7px;top:589.00px;font-size:13px;letter-spacing:0.75px;">Insert</div>
<div class="t" style="left:624.5px;top:589.00px;font-size:13px;letter-spacing:0.43px;">Load time: 1.41 seconds</div>
<svg class="a" style="left:963px;top:594px" width="12" height="12"><path d="M11 1 L1 11 M11 5 L5 11 M11 9 L9 11" stroke="#808080" stroke-width="1.3"/><path d="M11 0 L0 11 M11 4 L4 11 M11 8 L8 11" stroke="#fff" stroke-width="1"/></svg>
</body></html>
